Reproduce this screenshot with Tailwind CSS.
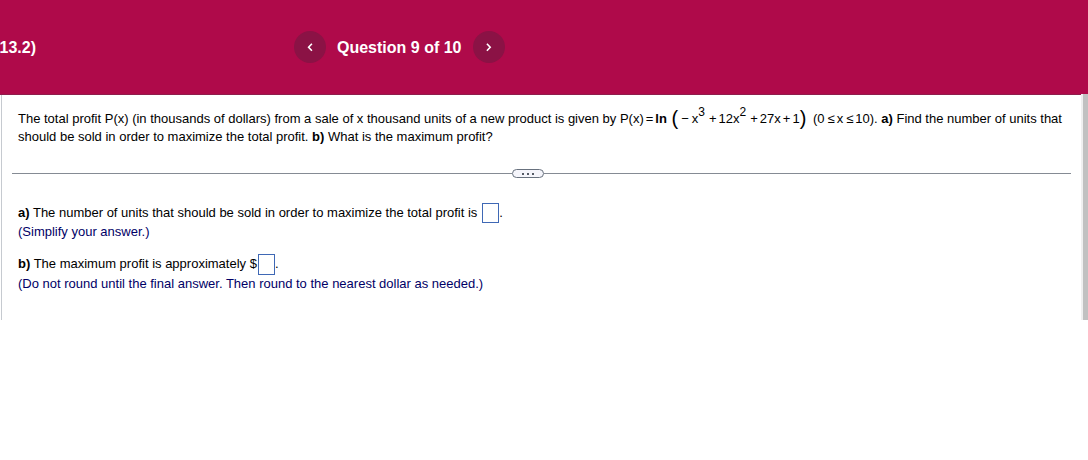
<!DOCTYPE html>
<html lang="en">
<head>
<meta charset="utf-8">
<meta name="viewport" content="width=device-width, initial-scale=1">
<title>Question 9 of 10</title>
<script src="https://cdn.jsdelivr.net/npm/@tailwindcss/browser@4"></script>
</head>
<body class="bg-white font-['Liberation_Sans',Arial,sans-serif] text-[13px] leading-[17px] text-black">
<header class="flex h-[95px] items-center border-b border-[#8f1d4c] bg-[#af0a4a] text-base font-bold text-white">
  <div class="flex w-9 justify-end overflow-hidden pt-0.5 whitespace-nowrap">13.2)</div>
  <nav class="ml-[258px] flex items-center" aria-label="Questions">
    <button type="button" aria-label="Previous question" class="flex size-8 items-center justify-center rounded-full bg-[#8b1245]">
      <svg class="size-2.5" viewBox="0 0 10 10" fill="none" stroke="currentColor" stroke-width="1.6"><path d="M6.9 1.8 3.6 5.3l3.3 3.5"/></svg>
    </button>
    <h1 class="mr-3 ml-[11px] pt-0.5 whitespace-nowrap">Question 9 of 10</h1>
    <button type="button" aria-label="Next question" class="flex size-8 items-center justify-center rounded-full bg-[#8b1245]">
      <svg class="size-2.5" viewBox="0 0 10 10" fill="none" stroke="currentColor" stroke-width="1.6"><path d="M2.9 1.8l3.3 3.5-3.3 3.5"/></svg>
    </button>
  </nav>
</header>
<div class="flex">
  <main class="ml-px min-w-0 flex-1 border-l border-[#c6cad0] pr-2.5 pb-7 pl-2.5">
    <p class="px-1.5 pt-[13px]">The total profit P(x) (in thousands of dollars) from a sale of x thousand units of a new product is given by P(x)<span class="mx-[2px]">=</span><b>ln</b> <span class="whitespace-nowrap"><span class="ml-px align-[-2px] text-[20px] leading-none">(</span><span class="mx-[3px]">−</span>x<sup class="align-[7px] top-0 text-xs leading-[0]">3</sup><span class="mr-[2px] ml-1">+</span>12x<sup class="align-[7px] top-0 text-xs leading-[0]">2</sup><span class="mr-[2px] ml-1">+</span>27x<span class="mx-[2px]">+</span>1<span class="align-[-2px] text-[20px] leading-none">)</span></span> <span class="ml-[3px] whitespace-nowrap">(0<span class="mr-[2px] ml-[3px]">≤</span>x<span class="mr-[2px] ml-[3px]">≤</span>10).</span> <b>a)</b> Find the number of units that should be sold in order to maximize the total profit. <b>b)</b> What is the maximum profit?</p>
    <div class="mt-6 flex items-center">
      <hr class="flex-[18] border-[#858b94]">
      <button type="button" aria-label="Show more" class="flex h-[9px] w-8 items-center justify-center gap-[3px] rounded-full border border-[#68717e] bg-[#f5f5fb]">
        <span class="size-[2px] bg-[#555b66]"></span><span class="size-[2px] bg-[#555b66]"></span><span class="size-[2px] bg-[#555b66]"></span>
      </button>
      <hr class="flex-[19] border-[#858b94]">
    </div>
    <section class="mt-[25px] px-1.5">
      <div class="flex h-5 items-start"><label for="units" class="pt-px"><b>a)</b> The number of units that should be sold in order to maximize the total profit is</label><input id="units" type="text" class="ml-[5px] h-5 w-[17px] border border-[#3f68b5] outline-none"><span class="pt-px">.</span></div>
      <p class="text-[#000066]">(Simplify your answer.)</p>
    </section>
    <section class="mt-3.5 px-1.5">
      <div class="flex h-[21px] items-start"><label for="profit" class="pt-px"><b>b)</b> The maximum profit is approximately $</label><input id="profit" type="text" class="ml-px h-[21px] w-[17px] border border-[#3f68b5] outline-none"><span class="pt-px">.</span></div>
      <p class="text-[#000066]">(Do not round until the final answer. Then round to the nearest dollar as needed.)</p>
    </section>
  </main>
  <div class="-mt-px w-[7px] border-l-2 border-[#f0f0f0] bg-[#c1c1c1]"></div>
</div>
</body>
</html>
